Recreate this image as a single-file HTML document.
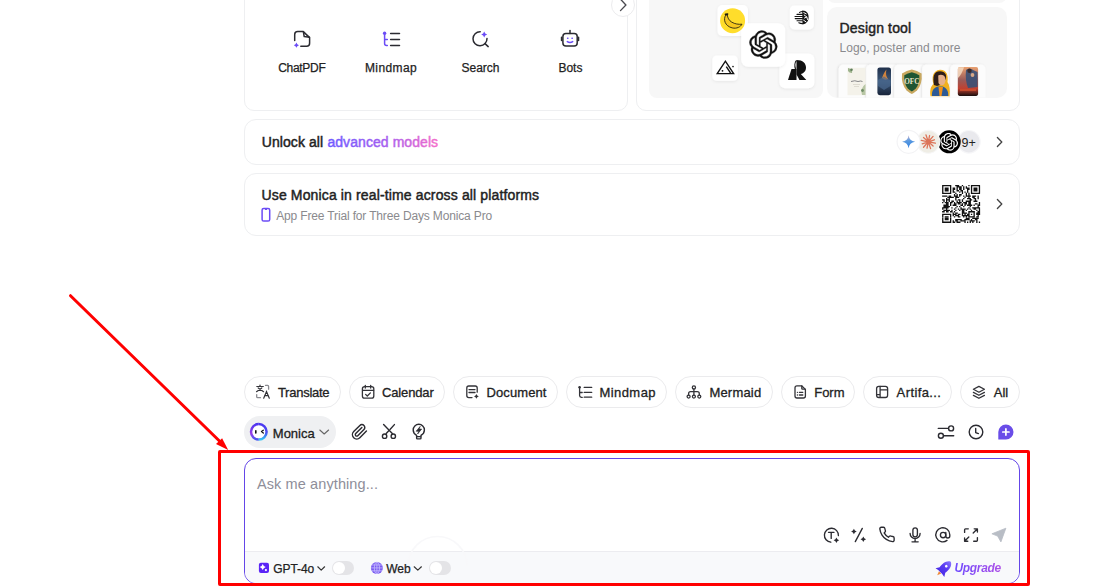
<!DOCTYPE html>
<html><head><meta charset="utf-8">
<style>
*{box-sizing:border-box;margin:0;padding:0}
html,body{width:1120px;height:588px;overflow:hidden;background:#fff;font-family:"Liberation Sans",sans-serif;color:#222}
.a{position:absolute}
.t{position:absolute;white-space:nowrap;line-height:1}
.card{position:absolute;border:1px solid #eeeff1;background:#fff}
.gp{position:absolute;background:#f7f7f7}
.chip{position:absolute;top:376px;height:32px;border:1px solid #ebebed;border-radius:16px;background:#fff}
.ct{position:absolute;top:385.9px;font-size:13px;line-height:13px;white-space:nowrap;color:#222;-webkit-text-stroke:0.3px #222}
svg.ov{position:absolute;left:0;top:0;width:1120px;height:588px;overflow:visible}
</style></head><body>

<!-- Card A: tools -->
<div class="card" style="left:244px;top:-20px;width:384px;height:131px;border-radius:10px"></div>
<div class="a" style="left:611px;top:-7px;width:24px;height:24px;border:1px solid #ececee;border-radius:50%;background:#fff"></div>
<div class="t" style="left:261.8px;top:61.8px;width:80px;text-align:center;font-size:12px;letter-spacing:-0.3px;-webkit-text-stroke:0.25px #222">ChatPDF</div>
<div class="t" style="left:351px;top:61.8px;width:80px;text-align:center;font-size:12px;letter-spacing:0.4px;-webkit-text-stroke:0.25px #222">Mindmap</div>
<div class="t" style="left:440.5px;top:61.8px;width:80px;text-align:center;font-size:12px;-webkit-text-stroke:0.25px #222">Search</div>
<div class="t" style="left:530.4px;top:61.8px;width:80px;text-align:center;font-size:12px;-webkit-text-stroke:0.25px #222">Bots</div>

<!-- Card B -->
<div class="card" style="left:636px;top:-20px;width:384px;height:131px;border-radius:10px"></div>
<div class="gp" style="left:649px;top:-20px;width:174px;height:118px;border-radius:8px"></div>
<div class="gp" style="left:827px;top:-20px;width:180px;height:23px;border-radius:8px"></div>
<div class="gp" style="left:827px;top:7px;width:180px;height:91px;border-radius:10px"></div>
<div class="t" style="left:839.6px;top:21.1px;font-size:14px;letter-spacing:0.15px;-webkit-text-stroke:0.45px #222;color:#222">Design tool</div>
<div class="t" style="left:839.6px;top:41.8px;font-size:12px;color:#8a8a8e">Logo, poster and more</div>

<!-- Card C: unlock -->
<div class="card" style="left:244px;top:119px;width:776px;height:46px;border-radius:12px"></div>
<div class="t" style="left:261.8px;top:135.1px;font-size:14px;letter-spacing:0.07px;-webkit-text-stroke:0.45px #222">Unlock all</div>

<!-- Card D -->
<div class="card" style="left:244px;top:173px;width:776px;height:63px;border-radius:12px"></div>
<div class="t" style="left:261.5px;top:188.35px;font-size:14px;letter-spacing:0.14px;-webkit-text-stroke:0.45px #222">Use Monica in real-time across all platforms</div>
<div class="t" style="left:276.2px;top:209.8px;font-size:12px;letter-spacing:-0.15px;color:#8a8a8e">App Free Trial for Three Days Monica Pro</div>

<!-- chips -->
<div class="chip" style="left:244px;width:97px"></div>
<div class="chip" style="left:349px;width:96px"></div>
<div class="chip" style="left:453px;width:105px"></div>
<div class="chip" style="left:566px;width:101px"></div>
<div class="chip" style="left:675px;width:98px"></div>
<div class="chip" style="left:781px;width:74px"></div>
<div class="chip" style="left:863px;width:89px"></div>
<div class="chip" style="left:960px;width:60px"></div>
<div class="ct" style="left:277.9px;letter-spacing:-0.25px">Translate</div>
<div class="ct" style="left:382px;letter-spacing:-0.15px">Calendar</div>
<div class="ct" style="left:486.5px;letter-spacing:0.1px">Document</div>
<div class="ct" style="left:599.4px;letter-spacing:0.45px">Mindmap</div>
<div class="ct" style="left:709.4px;letter-spacing:0.2px">Mermaid</div>
<div class="ct" style="left:814.2px">Form</div>
<div class="ct" style="left:896.6px;letter-spacing:0.4px">Artifa...</div>
<div class="ct" style="left:993.8px">All</div>

<!-- toolbar -->
<div class="a" style="left:244px;top:416px;width:92px;height:32px;border-radius:16px;background:#eff0f2"></div>
<div class="t" style="left:272.8px;top:426.7px;font-size:13px;-webkit-text-stroke:0.3px #222">Monica</div>

<!-- input -->
<div class="a" style="left:244px;top:458px;width:776px;height:126px;border:1px solid #6446e8;border-radius:12px;background:#fff;overflow:hidden">
  <div class="a" style="left:0;top:92px;width:776px;height:40px;background:#f8f9fb;border-top:1px solid #ececf0"></div>
</div>
<div class="t" style="left:257px;top:477.2px;font-size:14.5px;letter-spacing:0.1px;color:#8e8e99">Ask me anything...</div>
<div class="t" style="left:273.3px;top:562.7px;font-size:12px;letter-spacing:-0.1px;-webkit-text-stroke:0.25px #222">GPT-4o</div>
<div class="t" style="left:386.3px;top:562.7px;font-size:12px;letter-spacing:-0.1px;-webkit-text-stroke:0.25px #222">Web</div>
<div class="a" style="left:332px;top:561px;width:22px;height:14px;border-radius:7px;background:#e4e4e7"><div class="a" style="left:1px;top:1px;width:12px;height:12px;border-radius:50%;background:#fff"></div></div>
<div class="a" style="left:429px;top:561px;width:22px;height:14px;border-radius:7px;background:#e4e4e7"><div class="a" style="left:1px;top:1px;width:12px;height:12px;border-radius:50%;background:#fff"></div></div>
<div class="t" style="left:954.4px;top:561.8px;font-size:12px;font-weight:bold;font-style:italic;letter-spacing:-0.3px;padding:0 2px 4px 0;background:linear-gradient(90deg,#6d4aff,#b050e6);-webkit-background-clip:text;background-clip:text;color:transparent">Upgrade</div>

<svg class="ov" viewBox="0 0 1120 588">
<defs><filter id="sh" x="-30%" y="-30%" width="160%" height="160%"><feDropShadow dx="0" dy="1" stdDeviation="1.6" flood-color="#000" flood-opacity="0.07"/></filter></defs>
<g fill="none" stroke="#2b2b31" stroke-width="1.5" stroke-linecap="round" stroke-linejoin="round"><path d="M294.7,40.6 V34.6 a3,3 0 0 1 3,-3 H303.3 L309.6,37.6 V43.3 a3,3 0 0 1 -3,3 H300.8"/><path d="M303.4,31.8 L304.2,36.6 L309.4,37.2"/></g>
<path d="M296.40,42.60 Q296.92,44.68 299.00,45.20 Q296.92,45.72 296.40,47.80 Q295.88,45.72 293.80,45.20 Q295.88,44.68 296.40,42.60Z" fill="#6b4cf6" stroke="none"/>
<g fill="none" stroke-width="1.5" stroke-linecap="round"><path d="M384.6,33.4 V43.4 a2,2 0 0 0 2,2 H387.3 M384.6,39.5 H387.3" stroke="#6b4cf6"/><path d="M390.6,33.5 H399.5 M390.6,39.5 H399.5 M390.6,45.5 H399.5" stroke="#2b2b31"/></g><circle cx="384.6" cy="33.3" r="1.7" fill="#6b4cf6"/>
<g fill="none" stroke="#2b2b31" stroke-width="1.5" stroke-linecap="round"><path d="M480.2,31.7 A7,7 0 1 0 487,38.4"/><path d="M485,43.6 L488.2,46.6"/></g>
<path d="M484.20,31.60 Q484.80,34.00 487.20,34.60 Q484.80,35.20 484.20,37.60 Q483.60,35.20 481.20,34.60 Q483.60,34.00 484.20,31.60Z" fill="#6b4cf6" stroke="none"/>
<g fill="none" stroke="#2b2b31" stroke-width="1.5" stroke-linecap="round"><rect x="562.9" y="33.6" width="14.3" height="12.4" rx="3"/><path d="M570,30.4 V33.4"/><path d="M561.6,37.3 V40.4 M578.5,37.3 V40.4" stroke-width="1.6"/></g><g stroke="#6b4cf6" stroke-width="1.5" stroke-linecap="round" fill="none"><path d="M567.6,38.2 H567.9 M572,38.2 H572.3"/><path d="M567.3,41.6 Q570,43.5 572.7,41.6"/></g>
<path d="M620.7,-0.6 L625.9,5 L620.5,10.6" fill="none" stroke="#4a4a50" stroke-width="1.35" stroke-linecap="round" stroke-linejoin="round"/>
<rect x="717.5" y="5" width="30.5" height="31" rx="5" fill="#fff" filter="url(#sh)"/>
<rect x="789.8" y="5.4" width="24" height="24" rx="4.5" fill="#fff" filter="url(#sh)"/>
<rect x="712.3" y="55.4" width="25.5" height="25.4" rx="4.5" fill="#fff" filter="url(#sh)"/>
<rect x="779.4" y="53.5" width="35" height="34.8" rx="6" fill="#fff" filter="url(#sh)"/>
<rect x="741.2" y="23.3" width="44" height="43.4" rx="7" fill="#fff" filter="url(#sh)"/>
<circle cx="732.6" cy="20.7" r="12.5" fill="#ffdd2b"/>
<path d="M725.8,15 C723,19.5 724.8,26 732.2,27.9 C736.8,29 740.6,26.8 742,24.2 C738.5,24.6 735,24 731.8,22.2 C728.8,20.4 727.6,17.6 727.3,15 Z" fill="#f7c81e" stroke="#1e1a10" stroke-width="0.85" stroke-linejoin="round"/>
<path d="M725.5,14.3 L727.6,14.1" stroke="#1e1a10" stroke-width="1.6" stroke-linecap="round"/>
<path d="M22.2819 9.8211a5.9847 5.9847 0 0 0-.5157-4.9108 6.0462 6.0462 0 0 0-6.5098-2.9A6.0651 6.0651 0 0 0 4.9807 4.1818a5.9847 5.9847 0 0 0-3.9977 2.9 6.0462 6.0462 0 0 0 .7427 7.0966 5.98 5.98 0 0 0 .511 4.9107 6.051 6.051 0 0 0 6.5146 2.9001A5.9847 5.9847 0 0 0 13.2599 24a6.0557 6.0557 0 0 0 5.7718-4.2058 5.9894 5.9894 0 0 0 3.9977-2.9001 6.0557 6.0557 0 0 0-.7475-7.0729zm-9.022 12.6081a4.4755 4.4755 0 0 1-2.8764-1.0408l.1419-.0804 4.7783-2.7582a.7948.7948 0 0 0 .3927-.6813v-6.7369l2.02 1.1686a.071.071 0 0 1 .038.052v5.5826a4.504 4.504 0 0 1-4.4945 4.4944zm-9.6607-4.1254a4.4708 4.4708 0 0 1-.5346-3.0137l.142.0852 4.783 2.7582a.7712.7712 0 0 0 .7806 0l5.8428-3.3685v2.3324a.0804.0804 0 0 1-.0332.0615L9.74 19.9502a4.4992 4.4992 0 0 1-6.1408-1.6464zM2.3408 7.8956a4.485 4.485 0 0 1 2.3655-1.9728V11.6a.7664.7664 0 0 0 .3879.6765l5.8144 3.3543-2.0201 1.1685a.0757.0757 0 0 1-.071 0l-4.8303-2.7865A4.504 4.504 0 0 1 2.3408 7.872zm16.5963 3.8558L13.1038 8.364 15.1192 7.2a.0757.0757 0 0 1 .071 0l4.8303 2.7913a4.4944 4.4944 0 0 1-.6765 8.1042v-5.6772a.79.79 0 0 0-.407-.667zm2.0107-3.0231l-.142-.0852-4.7735-2.7818a.7759.7759 0 0 0-.7854 0L9.409 9.2297V6.8974a.0662.0662 0 0 1 .0284-.0615l4.8303-2.7866a4.4992 4.4992 0 0 1 6.6802 4.66zM8.3065 12.863l-2.02-1.1638a.0804.0804 0 0 1-.038-.0567V6.0742a4.4992 4.4992 0 0 1 7.3757-3.4537l-.142.0805L8.704 5.459a.7948.7948 0 0 0-.3927.6813zm1.0976-2.3654l2.602-1.4998 2.6069 1.4998v2.9994l-2.5974 1.4997-2.6067-1.4997Z" transform="translate(749.4,30.6) scale(1.165)" fill="#111" stroke="#111" stroke-width="0.3"/>
<path d="M802.2,10.6 C806.5,10.4 808.8,13.5 808.6,17.5 C808.5,21.5 806,24.2 802.5,24.3 Z" fill="#151515"/><path d="M803.8,12.6 L806.2,13.8 M804.2,15 L806.8,17 L804.5,18 M803.6,20.2 L806,21.8 M806.8,17 L807.5,19.5" stroke="#fff" stroke-width="1" fill="none" stroke-linecap="round"/><g stroke="#151515" stroke-width="1.1" stroke-linecap="round" fill="none"><path d="M799.5,12.4 Q801,11.5 802.5,11.5 M797,14.4 H802.5 M795,16.5 H802.5 M795.2,18.6 H802.5 M797,20.7 H802.5 M798.8,22.7 Q800.5,23.5 802.5,23.6"/></g>
<g fill="none" stroke="#111" stroke-width="1.4" stroke-linejoin="miter"><path d="M717.2,73.6 L725.4,61.2 L733.6,73.6 Z"/><path d="M726.3,66.6 L730.8,73.4" /></g><circle cx="722.5" cy="70.8" r="0.9" fill="#111"/><circle cx="733" cy="66.6" r="0.8" fill="#111"/>
<path d="M791.5,69 H796.5 V80 H788 Z" fill="#111"/><path d="M796.5,60 C803,60 806,63.5 806,67.5 C806,71 803.8,73.3 800.8,74 L806.3,80 H799.5 L796.5,74.5 Z" fill="#111"/><path d="M796.5,60.5 C794.8,62 794.5,66 795.5,69" fill="none" stroke="#111" stroke-width="1.2"/>
<defs><filter id="sh2" x="-30%" y="-30%" width="160%" height="160%"><feDropShadow dx="-1" dy="0" stdDeviation="1.2" flood-color="#000" flood-opacity="0.10"/></filter></defs>
<defs><clipPath id="dc"><rect x="827" y="7" width="180" height="90.6" rx="9"/></clipPath></defs><g clip-path="url(#dc)">
<rect x="838.7" y="64.4" width="35.3" height="40" rx="5" fill="#fcfcfc" filter="url(#sh2)"/>
<rect x="866.2" y="64.4" width="35.3" height="40" rx="5" fill="#fcfcfc" filter="url(#sh2)"/>
<rect x="894.3" y="64.4" width="35.3" height="40" rx="5" fill="#fcfcfc" filter="url(#sh2)"/>
<rect x="922.2" y="64.4" width="35.3" height="40" rx="5" fill="#fcfcfc" filter="url(#sh2)"/>
<rect x="950.3" y="64.4" width="35.3" height="40" rx="5" fill="#fcfcfc" filter="url(#sh2)"/>
<rect x="847.5" y="67.8" width="18" height="27.4" fill="#f4f2ea"/><path d="M848,68 Q853,69 852,73 Q849,73 848,71Z" fill="#9fb48e"/><circle cx="851.5" cy="69.8" r="1.3" fill="#5f7e5a"/><path d="M865.5,84 Q860,88 862,95 H865.5Z" fill="#b8c6a4"/><circle cx="862.5" cy="90.5" r="1.4" fill="#6f8c66"/><path d="M851,81.5 Q855,80 858,81.5 Q861,80.5 862.5,81.5" stroke="#6a6a70" stroke-width="0.8" fill="none"/><path d="M853,84.5 H860 M854,86.5 H859" stroke="#c8c4b8" stroke-width="0.5"/>
<defs><linearGradient id="ph" x1="0" y1="0" x2="0" y2="1"><stop offset="0" stop-color="#1f2f4a"/><stop offset="0.5" stop-color="#3d5878"/><stop offset="1" stop-color="#18243a"/></linearGradient></defs><rect x="877.4" y="67.4" width="13.6" height="27.8" rx="2.4" fill="url(#ph)"/><path d="M882,78 Q884,72 886.5,69.5 Q885,75 888,79 Q885,81 882,78Z" fill="#e08a3a" opacity="0.9"/><path d="M878,80 L884,76.5 L890.5,80.5 V86 L884,90 L878,86Z" fill="#4a6a90" opacity="0.7"/>
<path d="M911.8,69.6 Q917,70.5 921.6,73.5 Q922.6,84 917,90.5 Q914,93 911.8,94 Q909.6,93 906.6,90.5 Q901,84 902,73.5 Q906.6,70.5 911.8,69.6Z" fill="#c8a860"/><path d="M911.8,72.2 Q915.8,73 919.3,75.2 Q920,83 915.8,88.5 Q913.6,90.6 911.8,91.4 Q910,90.6 907.8,88.5 Q903.6,83 904.3,75.2 Q907.8,73 911.8,72.2Z" fill="#1e5533"/><text x="911.8" y="84.3" font-size="7.2" text-anchor="middle" fill="#e9e4cc" font-family="Liberation Serif" font-weight="bold">OFC</text>
<path d="M930.5,96.3 C929.5,90 931,86 933.5,84 C931.5,78 932.5,70.5 940,69.8 C947,69.8 948.5,76 947.5,82 C949.5,85 950.3,90 949.5,96.3 Z" fill="#f0b020"/><path d="M932,96 C931.5,91 933.5,87.5 938,86.5 L942.5,86.5 C946.5,87.5 948.5,91 948.2,96 Z" fill="#2d5a96"/><path d="M938.5,87 L943,87 L941.5,96 L939.5,96 Z" fill="#f0901a"/><path d="M934,85 C932.5,77 933.5,71.2 940,71.2 C945.5,71.2 946.8,75 945.8,79 L943,84 L937,86 Z" fill="#2e1e18"/><path d="M938.2,75.5 C941,74 944.5,75 945.2,77.8 L945.6,80.5 L944.4,84 C942.5,86 939.5,85.5 938.5,83 Z" fill="#e6b08a"/>
<defs><linearGradient id="pst" x1="0" y1="0" x2="0" y2="1"><stop offset="0" stop-color="#e8a070"/><stop offset="0.45" stop-color="#9a5a58"/><stop offset="0.75" stop-color="#c04030"/><stop offset="1" stop-color="#1a0e0e"/></linearGradient></defs><rect x="957.8" y="67.1" width="20.3" height="28.8" rx="1.8" fill="url(#pst)"/><path d="M958,67.2 H964 Q962,74 958,78Z" fill="#f6e0c8" opacity="0.8"/><path d="M966,70 Q970,67.5 974,70.5 L977.5,72 V87 L968,88 Q965,80 966,70Z" fill="#3a5076" opacity="0.9"/><circle cx="969.5" cy="70.8" r="2.2" fill="#3a2a2a"/><circle cx="972.5" cy="75" r="1.9" fill="#d8a888"/><path d="M960,89 H976 V91 H960Z" fill="#d05030" opacity="0.8"/>
</g>
<defs><linearGradient id="adv" gradientUnits="userSpaceOnUse" x1="328" y1="0" x2="438" y2="0"><stop offset="0" stop-color="#6f5bff"/><stop offset="0.5" stop-color="#a15ef0"/><stop offset="1" stop-color="#f56dcb"/></linearGradient></defs>
<text x="327.4" y="147" font-family="Liberation Sans" font-size="14" letter-spacing="0.07" fill="url(#adv)" stroke="url(#adv)" stroke-width="0.45">advanced models</text>
<circle cx="968.9" cy="141.8" r="11.3" fill="#e9e9ed" stroke="#f6f6f8" stroke-width="1.2"/>
<circle cx="949.2" cy="141.8" r="11.5" fill="#000"/>
<circle cx="928.3" cy="141.8" r="11.5" fill="#efede5" stroke="#f7f7f7" stroke-width="1.2"/>
<circle cx="908.6" cy="141.8" r="11.5" fill="#fff" stroke="#f3f3f5" stroke-width="1.2"/>
<defs><linearGradient id="gem" x1="0.3" y1="0" x2="0.5" y2="1"><stop offset="0" stop-color="#d2b8d0"/><stop offset="0.45" stop-color="#5a9ae0"/><stop offset="1" stop-color="#2f7fe0"/></linearGradient></defs>
<path d="M908.6,135.3 Q909.3,141.1 915.1,141.8 Q909.3,142.5 908.6,148.3 Q907.9,142.5 902.1,141.8 Q907.9,141.1 908.6,135.3Z" fill="url(#gem)"/>
<path d="M928.3,141.8 L935.36,143.23 M928.3,141.8 L933.10,146.04 M928.3,141.8 L930.59,148.63 M928.3,141.8 L927.03,148.07 M928.3,141.8 L923.53,147.20 M928.3,141.8 L922.23,143.84 M928.3,141.8 L921.24,140.37 M928.3,141.8 L923.50,137.56 M928.3,141.8 L926.01,134.97 M928.3,141.8 L929.57,135.53 M928.3,141.8 L933.07,136.40 M928.3,141.8 L934.37,139.76" stroke="#dc7458" stroke-width="1.3" stroke-linecap="round"/>
<path d="M22.2819 9.8211a5.9847 5.9847 0 0 0-.5157-4.9108 6.0462 6.0462 0 0 0-6.5098-2.9A6.0651 6.0651 0 0 0 4.9807 4.1818a5.9847 5.9847 0 0 0-3.9977 2.9 6.0462 6.0462 0 0 0 .7427 7.0966 5.98 5.98 0 0 0 .511 4.9107 6.051 6.051 0 0 0 6.5146 2.9001A5.9847 5.9847 0 0 0 13.2599 24a6.0557 6.0557 0 0 0 5.7718-4.2058 5.9894 5.9894 0 0 0 3.9977-2.9001 6.0557 6.0557 0 0 0-.7475-7.0729zm-9.022 12.6081a4.4755 4.4755 0 0 1-2.8764-1.0408l.1419-.0804 4.7783-2.7582a.7948.7948 0 0 0 .3927-.6813v-6.7369l2.02 1.1686a.071.071 0 0 1 .038.052v5.5826a4.504 4.504 0 0 1-4.4945 4.4944zm-9.6607-4.1254a4.4708 4.4708 0 0 1-.5346-3.0137l.142.0852 4.783 2.7582a.7712.7712 0 0 0 .7806 0l5.8428-3.3685v2.3324a.0804.0804 0 0 1-.0332.0615L9.74 19.9502a4.4992 4.4992 0 0 1-6.1408-1.6464zM2.3408 7.8956a4.485 4.485 0 0 1 2.3655-1.9728V11.6a.7664.7664 0 0 0 .3879.6765l5.8144 3.3543-2.0201 1.1685a.0757.0757 0 0 1-.071 0l-4.8303-2.7865A4.504 4.504 0 0 1 2.3408 7.872zm16.5963 3.8558L13.1038 8.364 15.1192 7.2a.0757.0757 0 0 1 .071 0l4.8303 2.7913a4.4944 4.4944 0 0 1-.6765 8.1042v-5.6772a.79.79 0 0 0-.407-.667zm2.0107-3.0231l-.142-.0852-4.7735-2.7818a.7759.7759 0 0 0-.7854 0L9.409 9.2297V6.8974a.0662.0662 0 0 1 .0284-.0615l4.8303-2.7866a4.4992 4.4992 0 0 1 6.6802 4.66zM8.3065 12.863l-2.02-1.1638a.0804.0804 0 0 1-.038-.0567V6.0742a4.4992 4.4992 0 0 1 7.3757-3.4537l-.142.0805L8.704 5.459a.7948.7948 0 0 0-.3927.6813zm1.0976-2.3654l2.602-1.4998 2.6069 1.4998v2.9994l-2.5974 1.4997-2.6067-1.4997Z" transform="translate(940.3,132.9) scale(0.74)" fill="#fff"/>
<path d="M946.2,133.5 A9.5,9.5 0 1 0 946.3,133.5Z" fill="none"/>
<text x="968.6" y="146.5" font-size="12.5" text-anchor="middle" fill="#222" font-family="Liberation Sans">9+</text>
<path d="M997.4,137.5 L1001.8,142 L997.4,146.5" fill="none" stroke="#444" stroke-width="1.3" stroke-linecap="round" stroke-linejoin="round"/>
<rect x="262.1" y="208.4" width="7.6" height="12.6" rx="1.6" fill="none" stroke="#6b4cf6" stroke-width="1.5"/><path d="M265,209.5 H267" stroke="#6b4cf6" stroke-width="1"/>
<path d="M942.1 184.9h9.17v1.31h-9.17zM955.2 184.9h3.93v1.31h-3.93zM961.8 184.9h1.31v1.31h-1.31zM968.3 184.9h1.31v1.31h-1.31zM970.9 184.9h9.17v1.31h-9.17zM942.1 186.2h1.31v1.31h-1.31zM950.0 186.2h1.31v1.31h-1.31zM956.5 186.2h5.24v1.31h-5.24zM963.1 186.2h1.31v1.31h-1.31zM965.7 186.2h1.31v1.31h-1.31zM970.9 186.2h1.31v1.31h-1.31zM978.8 186.2h1.31v1.31h-1.31zM942.1 187.5h1.31v1.31h-1.31zM944.7 187.5h3.93v1.31h-3.93zM950.0 187.5h1.31v1.31h-1.31zM952.6 187.5h2.62v1.31h-2.62zM956.5 187.5h1.31v1.31h-1.31zM959.1 187.5h2.62v1.31h-2.62zM963.1 187.5h1.31v1.31h-1.31zM965.7 187.5h3.93v1.31h-3.93zM970.9 187.5h1.31v1.31h-1.31zM973.5 187.5h3.93v1.31h-3.93zM978.8 187.5h1.31v1.31h-1.31zM942.1 188.8h1.31v1.31h-1.31zM944.7 188.8h3.93v1.31h-3.93zM950.0 188.8h1.31v1.31h-1.31zM952.6 188.8h2.62v1.31h-2.62zM956.5 188.8h1.31v1.31h-1.31zM959.1 188.8h2.62v1.31h-2.62zM963.1 188.8h1.31v1.31h-1.31zM967.0 188.8h2.62v1.31h-2.62zM970.9 188.8h1.31v1.31h-1.31zM973.5 188.8h3.93v1.31h-3.93zM978.8 188.8h1.31v1.31h-1.31zM942.1 190.1h1.31v1.31h-1.31zM944.7 190.1h3.93v1.31h-3.93zM950.0 190.1h1.31v1.31h-1.31zM952.6 190.1h1.31v1.31h-1.31zM956.5 190.1h2.62v1.31h-2.62zM960.4 190.1h2.62v1.31h-2.62zM967.0 190.1h1.31v1.31h-1.31zM970.9 190.1h1.31v1.31h-1.31zM973.5 190.1h3.93v1.31h-3.93zM978.8 190.1h1.31v1.31h-1.31zM942.1 191.5h1.31v1.31h-1.31zM950.0 191.5h1.31v1.31h-1.31zM952.6 191.5h2.62v1.31h-2.62zM959.1 191.5h1.31v1.31h-1.31zM961.8 191.5h1.31v1.31h-1.31zM964.4 191.5h1.31v1.31h-1.31zM967.0 191.5h1.31v1.31h-1.31zM970.9 191.5h1.31v1.31h-1.31zM978.8 191.5h1.31v1.31h-1.31zM942.1 192.8h9.17v1.31h-9.17zM955.2 192.8h1.31v1.31h-1.31zM961.8 192.8h1.31v1.31h-1.31zM965.7 192.8h1.31v1.31h-1.31zM968.3 192.8h1.31v1.31h-1.31zM970.9 192.8h9.17v1.31h-9.17zM953.9 194.1h1.31v1.31h-1.31zM956.5 194.1h1.31v1.31h-1.31zM959.1 194.1h2.62v1.31h-2.62zM965.7 194.1h1.31v1.31h-1.31zM968.3 194.1h1.31v1.31h-1.31zM942.1 195.4h5.24v1.31h-5.24zM948.6 195.4h2.62v1.31h-2.62zM953.9 195.4h3.93v1.31h-3.93zM959.1 195.4h1.31v1.31h-1.31zM963.1 195.4h1.31v1.31h-1.31zM965.7 195.4h5.24v1.31h-5.24zM972.2 195.4h3.93v1.31h-3.93zM977.5 195.4h1.31v1.31h-1.31zM947.3 196.7h6.55v1.31h-6.55zM955.2 196.7h3.93v1.31h-3.93zM964.4 196.7h1.31v1.31h-1.31zM968.3 196.7h1.31v1.31h-1.31zM972.2 196.7h2.62v1.31h-2.62zM977.5 196.7h1.31v1.31h-1.31zM946.0 198.0h1.31v1.31h-1.31zM948.6 198.0h1.31v1.31h-1.31zM955.2 198.0h1.31v1.31h-1.31zM963.1 198.0h1.31v1.31h-1.31zM967.0 198.0h3.93v1.31h-3.93zM973.5 198.0h2.62v1.31h-2.62zM977.5 198.0h1.31v1.31h-1.31zM942.1 199.3h2.62v1.31h-2.62zM946.0 199.3h3.93v1.31h-3.93zM955.2 199.3h1.31v1.31h-1.31zM957.8 199.3h2.62v1.31h-2.62zM961.8 199.3h1.31v1.31h-1.31zM969.6 199.3h2.62v1.31h-2.62zM974.9 199.3h1.31v1.31h-1.31zM943.4 200.6h1.31v1.31h-1.31zM946.0 200.6h1.31v1.31h-1.31zM948.6 200.6h1.31v1.31h-1.31zM951.3 200.6h2.62v1.31h-2.62zM956.5 200.6h1.31v1.31h-1.31zM959.1 200.6h1.31v1.31h-1.31zM961.8 200.6h1.31v1.31h-1.31zM965.7 200.6h5.24v1.31h-5.24zM973.5 200.6h3.93v1.31h-3.93zM942.1 201.9h1.31v1.31h-1.31zM944.7 201.9h3.93v1.31h-3.93zM950.0 201.9h2.62v1.31h-2.62zM953.9 201.9h1.31v1.31h-1.31zM956.5 201.9h5.24v1.31h-5.24zM963.1 201.9h3.93v1.31h-3.93zM968.3 201.9h2.62v1.31h-2.62zM978.8 201.9h1.31v1.31h-1.31zM946.0 203.2h2.62v1.31h-2.62zM950.0 203.2h1.31v1.31h-1.31zM953.9 203.2h2.62v1.31h-2.62zM957.8 203.2h2.62v1.31h-2.62zM961.8 203.2h1.31v1.31h-1.31zM964.4 203.2h2.62v1.31h-2.62zM968.3 203.2h2.62v1.31h-2.62zM974.9 203.2h2.62v1.31h-2.62zM978.8 203.2h1.31v1.31h-1.31zM943.4 204.6h5.24v1.31h-5.24zM950.0 204.6h1.31v1.31h-1.31zM952.6 204.6h3.93v1.31h-3.93zM960.4 204.6h2.62v1.31h-2.62zM964.4 204.6h1.31v1.31h-1.31zM967.0 204.6h5.24v1.31h-5.24zM973.5 204.6h1.31v1.31h-1.31zM977.5 204.6h2.62v1.31h-2.62zM943.4 205.9h6.55v1.31h-6.55zM956.5 205.9h1.31v1.31h-1.31zM959.1 205.9h1.31v1.31h-1.31zM963.1 205.9h1.31v1.31h-1.31zM969.6 205.9h1.31v1.31h-1.31zM977.5 205.9h1.31v1.31h-1.31zM942.1 207.2h6.55v1.31h-6.55zM951.3 207.2h1.31v1.31h-1.31zM955.2 207.2h1.31v1.31h-1.31zM960.4 207.2h1.31v1.31h-1.31zM968.3 207.2h1.31v1.31h-1.31zM972.2 207.2h7.86v1.31h-7.86zM942.1 208.5h1.31v1.31h-1.31zM946.0 208.5h1.31v1.31h-1.31zM953.9 208.5h1.31v1.31h-1.31zM957.8 208.5h1.31v1.31h-1.31zM960.4 208.5h5.24v1.31h-5.24zM967.0 208.5h1.31v1.31h-1.31zM969.6 208.5h1.31v1.31h-1.31zM973.5 208.5h2.62v1.31h-2.62zM978.8 208.5h1.31v1.31h-1.31zM943.4 209.8h6.55v1.31h-6.55zM951.3 209.8h1.31v1.31h-1.31zM955.2 209.8h1.31v1.31h-1.31zM959.1 209.8h1.31v1.31h-1.31zM961.8 209.8h2.62v1.31h-2.62zM965.7 209.8h1.31v1.31h-1.31zM970.9 209.8h1.31v1.31h-1.31zM976.2 209.8h1.31v1.31h-1.31zM978.8 209.8h1.31v1.31h-1.31zM942.1 211.1h2.62v1.31h-2.62zM946.0 211.1h2.62v1.31h-2.62zM950.0 211.1h2.62v1.31h-2.62zM953.9 211.1h1.31v1.31h-1.31zM961.8 211.1h2.62v1.31h-2.62zM968.3 211.1h6.55v1.31h-6.55zM977.5 211.1h2.62v1.31h-2.62zM952.6 212.4h1.31v1.31h-1.31zM955.2 212.4h2.62v1.31h-2.62zM961.8 212.4h5.24v1.31h-5.24zM968.3 212.4h1.31v1.31h-1.31zM973.5 212.4h1.31v1.31h-1.31zM976.2 212.4h3.93v1.31h-3.93zM942.1 213.7h9.17v1.31h-9.17zM952.6 213.7h3.93v1.31h-3.93zM957.8 213.7h2.62v1.31h-2.62zM961.8 213.7h1.31v1.31h-1.31zM964.4 213.7h1.31v1.31h-1.31zM967.0 213.7h2.62v1.31h-2.62zM970.9 213.7h1.31v1.31h-1.31zM973.5 213.7h1.31v1.31h-1.31zM976.2 213.7h3.93v1.31h-3.93zM942.1 215.0h1.31v1.31h-1.31zM950.0 215.0h1.31v1.31h-1.31zM952.6 215.0h1.31v1.31h-1.31zM955.2 215.0h3.93v1.31h-3.93zM961.8 215.0h7.86v1.31h-7.86zM973.5 215.0h1.31v1.31h-1.31zM977.5 215.0h1.31v1.31h-1.31zM942.1 216.3h1.31v1.31h-1.31zM944.7 216.3h3.93v1.31h-3.93zM950.0 216.3h1.31v1.31h-1.31zM953.9 216.3h1.31v1.31h-1.31zM957.8 216.3h2.62v1.31h-2.62zM963.1 216.3h1.31v1.31h-1.31zM965.7 216.3h1.31v1.31h-1.31zM968.3 216.3h6.55v1.31h-6.55zM976.2 216.3h2.62v1.31h-2.62zM942.1 217.7h1.31v1.31h-1.31zM944.7 217.7h3.93v1.31h-3.93zM950.0 217.7h1.31v1.31h-1.31zM965.7 217.7h3.93v1.31h-3.93zM972.2 217.7h6.55v1.31h-6.55zM942.1 219.0h1.31v1.31h-1.31zM944.7 219.0h3.93v1.31h-3.93zM950.0 219.0h1.31v1.31h-1.31zM955.2 219.0h6.55v1.31h-6.55zM964.4 219.0h5.24v1.31h-5.24zM970.9 219.0h1.31v1.31h-1.31zM974.9 219.0h2.62v1.31h-2.62zM942.1 220.3h1.31v1.31h-1.31zM950.0 220.3h1.31v1.31h-1.31zM952.6 220.3h1.31v1.31h-1.31zM955.2 220.3h2.62v1.31h-2.62zM960.4 220.3h5.24v1.31h-5.24zM969.6 220.3h5.24v1.31h-5.24zM976.2 220.3h1.31v1.31h-1.31zM942.1 221.6h9.17v1.31h-9.17zM952.6 221.6h2.62v1.31h-2.62zM956.5 221.6h3.93v1.31h-3.93zM964.4 221.6h1.31v1.31h-1.31zM967.0 221.6h1.31v1.31h-1.31zM969.6 221.6h1.31v1.31h-1.31zM972.2 221.6h1.31v1.31h-1.31zM976.2 221.6h1.31v1.31h-1.31zM978.8 221.6h1.31v1.31h-1.31z" fill="#111"/>
<path d="M997.4,199.5 L1001.8,204 L997.4,208.5" fill="none" stroke="#444" stroke-width="1.3" stroke-linecap="round" stroke-linejoin="round"/>
<g fill="none" stroke="#333338" stroke-width="1.2" stroke-linecap="round"><path d="M256.8,386.5 H263.3 M260,385.1 V386.3 M258.2,387.9 L263.6,391.7 M261.8,387.9 L256.5,391.7"/><path d="M263.7,398.2 L266.5,391.6 L269.3,398.2 M264.6,395.7 H268.4"/></g><g fill="none" stroke="#8a8a90" stroke-width="1.3" stroke-linecap="round"><path d="M265.5,385.4 H267.6 a1,1 0 0 1 1,1 V389.2"/><path d="M256.7,394.6 V396.7 a1,1 0 0 0 1,1 H260.5"/></g>
<g fill="none" stroke="#333338" stroke-width="1.3" stroke-linecap="round" stroke-linejoin="round"><rect x="362.4" y="386.6" width="11.4" height="11.6" rx="2.2"/><path d="M362.6,390.3 H373.6 M365.3,385.3 V388 M370.7,385.3 V388"/><path d="M365.6,394.4 L367.3,396 L370.4,392.9"/></g>
<g fill="none" stroke="#333338" stroke-width="1.3" stroke-linecap="round" stroke-linejoin="round"><path d="M477.2,392.2 V388 a2,2 0 0 0 -2,-2 H468.8 a2,2 0 0 0 -2,2 V395.6 a2,2 0 0 0 2,2 H472"/><path d="M469,389.6 H475 M469,392.5 H475"/></g>
<path d="M476.40,394.00 Q476.88,395.92 478.80,396.40 Q476.88,396.88 476.40,398.80 Q475.92,396.88 474.00,396.40 Q475.92,395.92 476.40,394.00Z" fill="#333338" stroke="none"/>
<g fill="none" stroke="#333338" stroke-width="1.3" stroke-linecap="round"><path d="M579.6,387.4 V395.6 a1.8,1.8 0 0 0 1.8,1.8 H582.2 M579.6,392.5 H582.2"/><path d="M584.2,387.4 H591.7 M584.2,392.4 H591.7 M584.2,397.2 H591.7"/></g><circle cx="579.6" cy="387.3" r="1.3" fill="#333338"/>
<g fill="none" stroke="#333338" stroke-width="1.3" stroke-linecap="round"><circle cx="693.9" cy="387.4" r="1.6"/><circle cx="688.6" cy="396.6" r="1.5"/><circle cx="693.9" cy="396.6" r="1.5"/><circle cx="699.3" cy="396.6" r="1.5"/><path d="M693.9,389 V395.1 M688.6,395.1 V393.7 a2,2 0 0 1 2,-2 H697.3 a2,2 0 0 1 2,2 V395.1"/></g>
<g fill="none" stroke="#333338" stroke-width="1.3" stroke-linecap="round" stroke-linejoin="round"><path d="M801.6,385.8 H797 a2,2 0 0 0 -2,2 V396 a2,2 0 0 0 2,2 H803.4 a2,2 0 0 0 2,-2 V389.4 Z"/><path d="M801.8,386 V388.4 a0.8,0.8 0 0 0 0.8,0.8 H805.2"/><path d="M797.4,392.3 H797.5 M799.4,392.3 H802.8 M797.4,395 H797.5 M799.4,395 H802.8"/></g>
<g fill="none" stroke="#333338" stroke-width="1.3" stroke-linecap="round"><rect x="876.6" y="386.3" width="11" height="11.2" rx="2.2"/><path d="M880.1,386.4 V397.4 M880.1,389.9 H887.5 M876.7,394.6 H880"/></g>
<g fill="none" stroke="#333338" stroke-width="1.3" stroke-linecap="round" stroke-linejoin="round"><path d="M978.9,386.4 L984.4,389.3 L978.9,392.2 L973.4,389.3 Z"/><path d="M973.4,392.4 L978.9,395.3 L984.4,392.4"/><path d="M973.4,395.4 L978.9,398.3 L984.4,395.4"/></g>
<defs><linearGradient id="mon" x1="0.8" y1="0" x2="0.2" y2="1"><stop offset="0" stop-color="#4a3cf0"/><stop offset="0.55" stop-color="#6a3ef0"/><stop offset="0.75" stop-color="#a048e8"/><stop offset="1" stop-color="#3cb8f0"/></linearGradient></defs>
<defs><linearGradient id="monL" x1="0" y1="0" x2="0" y2="1"><stop offset="0" stop-color="#4b35f0"/><stop offset="0.6" stop-color="#9a3ee8"/><stop offset="1" stop-color="#4a58f0"/></linearGradient><linearGradient id="monR" x1="0" y1="0" x2="0" y2="1"><stop offset="0" stop-color="#4b35f0"/><stop offset="0.55" stop-color="#4a50f0"/><stop offset="1" stop-color="#36c4f2"/></linearGradient></defs>
<circle cx="258.8" cy="431.8" r="7" fill="#fff"/>
<path d="M258.8,424 A7.8,7.8 0 0 0 258.8,439.6" fill="none" stroke="url(#monL)" stroke-width="2.5"/>
<path d="M258.8,424 A7.8,7.8 0 0 1 258.8,439.6" fill="none" stroke="url(#monR)" stroke-width="2.5"/>
<path d="M255.8,430.7 V432.9" stroke="#111" stroke-width="1.6" stroke-linecap="round"/><path d="M263.3,430.2 L261.5,431.6 L263.3,433" fill="none" stroke="#111" stroke-width="1.3" stroke-linecap="round" stroke-linejoin="round"/>
<path d="M319.8,430 L324.2,434 L328.6,430" fill="none" stroke="#666" stroke-width="1.1" stroke-linecap="round" stroke-linejoin="round"/>
<path d="m21.44 11.05-9.19 9.19a6 6 0 0 1-8.49-8.49l8.57-8.57A4 4 0 1 1 18 8.84l-8.59 8.57a2 2 0 0 1-2.83-2.83l8.49-8.48" transform="translate(351.0,423.1) scale(0.72)" fill="none" stroke="#2b2b31" stroke-width="2" stroke-linecap="round" stroke-linejoin="round"/>
<g fill="none" stroke="#2b2b31" stroke-width="1.4" stroke-linecap="round"><path d="M383.6,424.6 L392.3,433.6 M394.4,424.6 L390.2,429.2 M389,430.6 L386.2,433.6"/><circle cx="384.6" cy="436.2" r="2.2"/><circle cx="393.3" cy="436.2" r="2.2"/></g>
<g fill="none" stroke="#2b2b31" stroke-width="1.4" stroke-linecap="round" stroke-linejoin="round"><path d="M416.6,436.6 V435.4 C414.4,434 413.2,432.2 413.2,429.9 a5.6,5.6 0 0 1 11.2,0 C424.4,432.2 423.2,434 421,435.4 V436.6"/><rect x="416.6" y="436.6" width="4.4" height="2.3" rx="0.8"/></g><path d="M420.2,426.4 L416.2,431.2 H418.9 L417.6,434 L421.6,429.1 H419 Z" fill="#2b2b31" stroke="#2b2b31" stroke-width="0.7" stroke-linejoin="round"/>
<g fill="none" stroke="#2b2b31" stroke-width="1.4" stroke-linecap="round"><path d="M938.3,428.4 H948.4 M944,435.7 H953.7"/><circle cx="951.1" cy="428.4" r="2.5"/><circle cx="940.9" cy="435.7" r="2.5"/></g>
<g fill="none" stroke="#2b2b31" stroke-width="1.4" stroke-linecap="round" stroke-linejoin="round"><circle cx="976" cy="432" r="6.8"/><path d="M975.7,428.5 V432.6 L978.4,433.6"/></g>
<path d="M998.3,439.6 V432 a7.6,7.6 0 1 1 7.6,7.6 Z" fill="#6a4de8"/><path d="M1005.9,428.9 V435.1 M1002.8,432 H1009" stroke="#fff" stroke-width="1.7" stroke-linecap="round"/>
<g fill="none" stroke="#2b2b31" stroke-width="1.35" stroke-linecap="round" stroke-linejoin="round"><path d="M838.4,535.6 A7,7 0 1 0 830.8,542.2"/><path d="M828.5,532.3 H834 M831.2,532.3 V538.4"/><path d="M862.3,528.4 L855.3,541.6"/></g>
<path d="M836.40,537.50 Q836.96,539.74 839.20,540.30 Q836.96,540.86 836.40,543.10 Q835.84,540.86 833.60,540.30 Q835.84,539.74 836.40,537.50Z" fill="#2b2b31" stroke="none"/>
<path d="M853.90,528.70 Q854.46,530.94 856.70,531.50 Q854.46,532.06 853.90,534.30 Q853.34,532.06 851.10,531.50 Q853.34,530.94 853.90,528.70Z" fill="#2b2b31" stroke="none"/>
<path d="M863.30,536.40 Q863.86,538.64 866.10,539.20 Q863.86,539.76 863.30,542.00 Q862.74,539.76 860.50,539.20 Q862.74,538.64 863.30,536.40Z" fill="#2b2b31" stroke="none"/>
<path d="M22 16.92v3a2 2 0 0 1-2.18 2 19.79 19.79 0 0 1-8.63-3.07 19.5 19.5 0 0 1-6-6 19.79 19.79 0 0 1-3.07-8.67A2 2 0 0 1 4.11 2h3a2 2 0 0 1 2 1.72 12.84 12.84 0 0 0 .7 2.81 2 2 0 0 1-.45 2.11L8.09 9.91a16 16 0 0 0 6 6l1.27-1.27a2 2 0 0 1 2.11-.45 12.84 12.84 0 0 0 2.81.7A2 2 0 0 1 22 16.92z" transform="translate(878.3,525.8) scale(0.72)" fill="none" stroke="#2b2b31" stroke-width="1.9" stroke-linejoin="round"/>
<g fill="none" stroke="#2b2b31" stroke-width="1.35" stroke-linecap="round"><rect x="912.9" y="527.8" width="4.5" height="9" rx="2.25"/><path d="M910.1,533.5 a5,5 0 0 0 10,0 M915.1,538.5 V541.8 M912,541.8 H918.2"/></g>
<g fill="none" stroke="#2b2b31" stroke-width="1.35" stroke-linecap="round"><circle cx="943.1" cy="535" r="2.7"/><path d="M945.8,532.5 V536 a2,2 0 0 0 4,0 V534.8 a7,7 0 1 0 -2.8,5.6"/></g>
<g fill="none" stroke="#2b2b31" stroke-width="1.35" stroke-linecap="round" stroke-linejoin="round"><path d="M964.6,532.4 V529.7 a0.9,0.9 0 0 1 0.9,-0.9 H968.3 M977.4,537.6 V540.3 a0.9,0.9 0 0 1 -0.9,0.9 H973.7"/><path d="M973.2,533 L977.2,529 M974.2,528.8 H977.4 V532 M968.8,537 L964.8,541 M964.6,538 V541.2 H967.8"/></g>
<path d="M1005.9,528.2 L991.9,533.8 L997.6,536.1 L1000.9,541.9 Z" fill="#b8bdc5" stroke="#b8bdc5" stroke-width="0.8" stroke-linejoin="round"/>
<path d="M408,566 A29.5,29.5 0 0 1 467,566" fill="none" stroke="#f8f8fa" stroke-width="1.6"/>
<rect x="258.9" y="562.8" width="10.1" height="10.2" rx="2" fill="#5a24f6"/>
<path d="M262.70,564.10 Q263.45,566.35 265.70,567.10 Q263.45,567.85 262.70,570.10 Q261.95,567.85 259.70,567.10 Q261.95,566.35 262.70,564.10Z" fill="#fff" stroke="none"/>
<circle cx="265.9" cy="570.1" r="1.1" fill="#fff"/>
<path d="M317.8,566.8 L321.2,570.1 L324.6,566.8" fill="none" stroke="#333" stroke-width="1.2" stroke-linecap="round" stroke-linejoin="round"/>
<circle cx="376.9" cy="567.9" r="6" fill="#7a5cf0"/><g fill="none" stroke="#c8bcff" stroke-width="0.8"><ellipse cx="376.9" cy="567.9" rx="2.6" ry="5.8"/><path d="M371,567.9 H382.8 M371.8,565 H382 M371.8,570.8 H382 M376.9,562 V573.8"/></g>
<path d="M414.2,566.8 L417.8,570.1 L421.4,566.8" fill="none" stroke="#333" stroke-width="1.2" stroke-linecap="round" stroke-linejoin="round"/>
<defs><linearGradient id="rk" x1="0" y1="0" x2="0" y2="1"><stop offset="0" stop-color="#8a78ff"/><stop offset="0.5" stop-color="#5a3cf2"/><stop offset="1" stop-color="#4a2ee8"/></linearGradient></defs>
<g transform="translate(944.3,568.2) rotate(45)"><path d="M-1.6,6 L0,10 L1.6,6 Z" fill="#f08a3a"/><path d="M0,-9.2 C4.2,-7.2 4.6,-2 4,2.6 L6.2,6.2 L2.6,5.6 H-2.6 L-6.2,6.2 L-4,2.6 C-4.6,-2 -4.2,-7.2 0,-9.2 Z" fill="url(#rk)"/><circle cx="0" cy="-2.8" r="1.3" fill="#fff"/></g>
</svg>
<!-- red annotation -->
<div class="a" style="left:218px;top:450px;width:812px;height:136px;border:3px solid #ff0000;border-radius:2px"></div>
<svg class="ov" viewBox="0 0 1120 588">
  <line x1="70.5" y1="295.7" x2="222" y2="443.5" stroke="#f00" stroke-width="3" stroke-linecap="round"/>
  <polygon points="228.2,449.9 216,444.1 222.1,438.2" fill="#f00"/>
</svg>

</body></html>
